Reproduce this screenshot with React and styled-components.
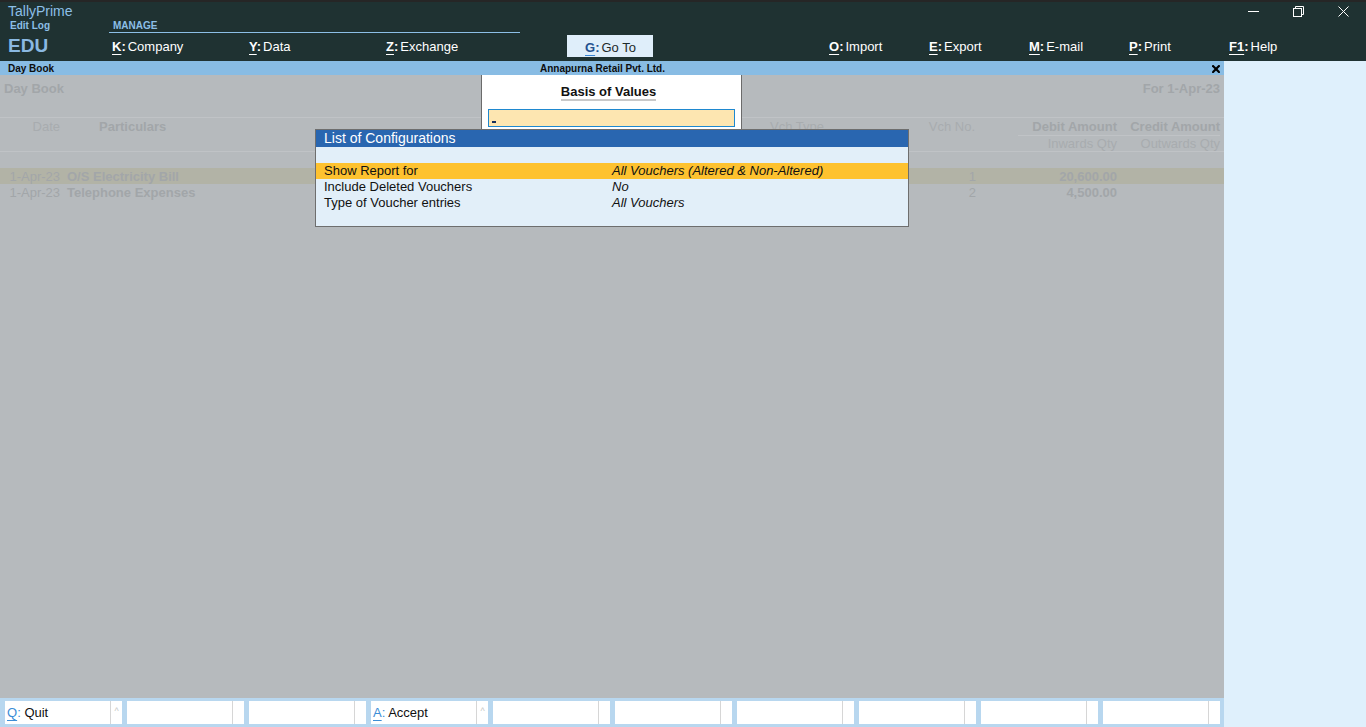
import React from 'react';
import styled, { createGlobalStyle } from 'styled-components';

const GlobalStyle = createGlobalStyle`
  html, body { margin: 0; padding: 0; }
  body { font-family: "Liberation Sans", Arial, sans-serif; overflow: hidden; background: #b6babd; }
  * { box-sizing: border-box; }
`;

const COLS = '60px 710px 130px 76px 42px 100px 102px';

const Screen = styled.div`
  width: 1366px;
  height: 727px;
  display: flex;
  flex-direction: column;
  overflow: hidden;
`;

/* ---------- top bar ---------- */
const TopBar = styled.header`
  height: 61px;
  flex-shrink: 0;
  background: #1f3232;
  border-top: 2px solid #262626;
  display: flex;
`;

const Brand = styled.div`
  width: 109px;
  display: flex;
  flex-direction: column;
  color: #8cbfe7;
`;

const ProductName = styled.div`
  font-size: 14px;
  line-height: 16px;
  padding: 1px 0 0 8px;
`;

const EditLog = styled.div`
  font-size: 10px;
  font-weight: bold;
  line-height: 12px;
  margin-top: 1px;
  padding-left: 10px;
`;

const EduMark = styled.div`
  font-size: 19px;
  font-weight: bold;
  line-height: 22px;
  margin-top: 3px;
  padding-left: 8px;
  color: #8ab9e2;
`;

const TopMain = styled.div`
  flex: 1;
  display: flex;
  flex-direction: column;
`;

const TopRow = styled.div`
  height: 31px;
  display: flex;
  align-items: flex-start;
`;

const ManageTab = styled.div`
  width: 411px;
  height: 31px;
  border-bottom: 1px solid #8cbfe7;
  display: flex;
  align-items: flex-end;
  padding: 0 0 0 4px;
  color: #8cbfe7;
  font-size: 10px;
  font-weight: bold;
  line-height: 12px;
`;

const WindowControls = styled.div`
  margin-left: auto;
  display: flex;
`;

const WinButton = styled.div`
  width: 45px;
  height: 18px;
  display: flex;
  align-items: center;
  justify-content: center;
`;

const MenuRow = styled.nav`
  height: 28px;
  padding: 0 0 2px 3px;
  display: flex;
  align-items: center;
`;

const MenuGroup = styled.div`
  display: flex;
  margin-left: ${p => p.$offset || 0}px;
`;

const MenuItem = styled.div`
  width: ${p => p.$w}px;
  font-size: 13px;
  line-height: 16px;
  padding-top: 2px;
  color: #ffffff;
  white-space: nowrap;
`;

const KeyChar = styled.span`
  font-weight: bold;
  color: ${p => (p.$dark ? '#24518f' : '#ffffff')};
  span {
    text-decoration: underline;
    text-underline-offset: 3px;
    text-decoration-color: ${p => (p.$dark ? '#3a86d4' : '#ffffff')};
  }
`;

const MenuLabel = styled.span`
  margin-left: 2px;
`;

const GoToBox = styled.div`
  margin-left: 44px;
  width: 86px;
  height: 22px;
  background: #dfeefa;
  display: flex;
  align-items: center;
  padding: 2px 0 0 18px;
  font-size: 13px;
  color: #1e2a2a;
`;

/* ---------- workspace ---------- */
const Workspace = styled.div`
  flex: 1;
  display: flex;
  min-height: 0;
`;

const MainPanel = styled.main`
  width: 1224px;
  display: flex;
  flex-direction: column;
`;

const SidePanel = styled.aside`
  flex: 1;
  background: #dff0fc;
`;

const TitleBar = styled.div`
  height: 14px;
  background: #88bce4;
  display: grid;
  grid-template-columns: 540px auto 1fr;
  align-items: center;
  font-size: 10px;
  font-weight: bold;
  line-height: 14px;
  padding-top: 1px;
  color: #0d0d0d;
`;

const TitleLeft = styled.div`
  padding-left: 8px;
`;

const TitleCenter = styled.div``;

const TitleRight = styled.div`
  display: flex;
  justify-content: flex-end;
  padding-right: 4px;
`;

const ReportBody = styled.section`
  flex: 1;
  background: #b6babd;
  position: relative;
  overflow: hidden;
  color: #a2a6a9;
  font-size: 13px;
`;

const ReportHeading = styled.div`
  height: 43px;
  border-bottom: 1px solid #c0c3c6;
  display: flex;
  justify-content: space-between;
  padding: 6px 4px 0 4px;
  font-weight: bold;
  line-height: 16px;
`;

const HeadRow = styled.div`
  display: grid;
  grid-template-columns: ${COLS};
  height: ${p => p.$h}px;
  border-bottom: ${p => (p.$rule ? '1px solid #c0c3c6' : 'none')};
`;

const HeadCell = styled.div`
  text-align: ${p => p.$align || 'left'};
  padding-left: ${p => p.$pl || 0}px;
  padding-right: ${p => p.$pr || 0}px;
  padding-top: 1px;
  font-weight: ${p => (p.$bold ? 'bold' : 'normal')};
  color: ${p => (p.$bold ? '#a2a6a9' : '#a8acaf')};
  line-height: 16px;
  white-space: nowrap;
  border-bottom: ${p => (p.$rule ? '1px solid #c0c3c6' : 'none')};
`;

const EntryList = styled.div`
  margin-top: 16px;
  display: flex;
  flex-direction: column;
`;

const EntryRow = styled.div`
  display: grid;
  grid-template-columns: ${COLS};
  height: 16px;
  line-height: 16px;
  padding-top: 1px;
  background: ${p => (p.$active ? '#b2b3a6' : 'transparent')};
`;

const Cell = styled.div`
  text-align: ${p => p.$align || 'left'};
  padding-left: ${p => p.$pl || 0}px;
  padding-right: ${p => p.$pr || 0}px;
  font-weight: ${p => (p.$bold ? 'bold' : 'normal')};
  white-space: nowrap;
`;

/* ---------- popups ---------- */
const BasisPopup = styled.div`
  position: absolute;
  left: 481px;
  top: 0;
  width: 261px;
  height: 60px;
  background: #ffffff;
  border-left: 1px solid #6b6b6b;
  border-right: 1px solid #6b6b6b;
  display: flex;
  flex-direction: column;
  align-items: center;
  padding-right: 6px;
`;

const BasisTitle = styled.div`
  margin-top: 9px;
  font-size: 13px;
  font-weight: bold;
  line-height: 15px;
  color: #111;
  border-bottom: 2px solid #c9c9c9;
`;

const BasisInput = styled.div`
  align-self: stretch;
  margin: 8px 0 0 6px;
  height: 18px;
  background: #fde6b1;
  border: 1px solid #1f88cf;
  position: relative;
`;

const Caret = styled.span`
  position: absolute;
  left: 3px;
  bottom: 3px;
  width: 4px;
  height: 2px;
  background: #16305c;
`;

const ConfigPopup = styled.div`
  position: absolute;
  left: 315px;
  top: 54px;
  width: 594px;
  height: 98px;
  background: #e2eff9;
  border: 1px solid #6e6e6e;
  display: flex;
  flex-direction: column;
`;

const ConfigHeader = styled.div`
  height: 17px;
  background: #2966b0;
  color: #ffffff;
  font-size: 14px;
  line-height: 17px;
  padding-left: 8px;
`;

const ConfigSpacer = styled.div`
  height: 16px;
`;

const ConfigRow = styled.div`
  display: grid;
  grid-template-columns: 288px 1fr;
  height: 16px;
  line-height: 16px;
  padding-left: 8px;
  font-size: 13px;
  color: #111;
  background: ${p => (p.$active ? '#fec22f' : 'transparent')};
`;

const ConfigLabel = styled.div``;

const ConfigValue = styled.div`
  font-style: italic;
`;

/* ---------- button bar ---------- */
const ButtonBar = styled.footer`
  height: 29px;
  background: #b8d7ef;
  display: flex;
  gap: 5px;
  padding: 3px 0 3px 5px;
`;

const FKey = styled.div`
  width: 117px;
  height: 23px;
  background: #ffffff;
  display: flex;
`;

const FKeyLabel = styled.div`
  flex: 1;
  padding: 1px 0 0 2px;
  font-size: 13px;
  line-height: 22px;
  color: #111;
  white-space: nowrap;
`;

const FKeyLetter = styled.span`
  color: #3c8dd6;
  span {
    text-decoration: underline;
    text-underline-offset: 3px;
  }
`;

const FKeyTail = styled.div`
  width: 12px;
  border-left: 1px solid #d6d6d6;
  color: #c4c4c4;
  font-size: 9px;
  line-height: 20px;
  text-align: center;
`;

/* ---------- icons ---------- */
const MinimizeIcon = () => (
  <svg width="11" height="11" viewBox="0 0 11 11">
    <line x1="0" y1="5.5" x2="11" y2="5.5" stroke="#fff" strokeWidth="1" />
  </svg>
);

const RestoreIcon = () => (
  <svg width="11" height="11" viewBox="0 0 11 11" fill="none" stroke="#fff" strokeWidth="1">
    <path d="M2.5 2.5 V0.5 H10.5 V8.5 H8.5" />
    <rect x="0.5" y="2.5" width="8" height="8" />
  </svg>
);

const CloseIcon = () => (
  <svg width="11" height="11" viewBox="0 0 11 11" stroke="#fff" strokeWidth="1">
    <line x1="0.5" y1="0.5" x2="10.5" y2="10.5" />
    <line x1="10.5" y1="0.5" x2="0.5" y2="10.5" />
  </svg>
);

const SmallClose = () => (
  <svg width="8" height="8" viewBox="0 0 8 8" stroke="#000" strokeWidth="2.2" strokeLinecap="square">
    <line x1="1" y1="1" x2="7" y2="7" />
    <line x1="7" y1="1" x2="1" y2="7" />
  </svg>
);

const Key = ({ k, dark }) => (
  <KeyChar $dark={dark}>
    <span>{k}</span>:
  </KeyChar>
);

const leftMenu = [
  ['K', 'Company'],
  ['Y', 'Data'],
  ['Z', 'Exchange'],
];
const rightMenu = [
  ['O', 'Import'],
  ['E', 'Export'],
  ['M', 'E-mail'],
  ['P', 'Print'],
  ['F1', 'Help'],
];

const entries = [
  { date: '1-Apr-23', part: 'O/S Electricity Bill', no: '1', debit: '20,600.00', active: true },
  { date: '1-Apr-23', part: 'Telephone Expenses', no: '2', debit: '4,500.00' },
];

const configs = [
  ['Show Report for', 'All Vouchers (Altered & Non-Altered)', true],
  ['Include Deleted Vouchers', 'No'],
  ['Type of Voucher entries', 'All Vouchers'],
];

const fkeys = [
  { k: 'Q', label: 'Quit', caret: true },
  {}, {},
  { k: 'A', label: 'Accept', caret: true },
  {}, {}, {}, {}, {}, {},
];

export default function App() {
  return (
    <>
      <GlobalStyle />
      <Screen>
        <TopBar>
          <Brand>
            <ProductName>TallyPrime</ProductName>
            <EditLog>Edit Log</EditLog>
            <EduMark>EDU</EduMark>
          </Brand>
          <TopMain>
            <TopRow>
              <ManageTab>MANAGE</ManageTab>
              <WindowControls>
                <WinButton><MinimizeIcon /></WinButton>
                <WinButton><RestoreIcon /></WinButton>
                <WinButton><CloseIcon /></WinButton>
              </WindowControls>
            </TopRow>
            <MenuRow>
              <MenuGroup>
                {leftMenu.map(([k, l]) => (
                  <MenuItem key={k} $w={137}>
                    <Key k={k} />
                    <MenuLabel>{l}</MenuLabel>
                  </MenuItem>
                ))}
              </MenuGroup>
              <GoToBox>
                <Key k="G" dark />
                <MenuLabel>Go To</MenuLabel>
              </GoToBox>
              <MenuGroup $offset={176}>
                {rightMenu.map(([k, l]) => (
                  <MenuItem key={k} $w={100}>
                    <Key k={k} />
                    <MenuLabel>{l}</MenuLabel>
                  </MenuItem>
                ))}
              </MenuGroup>
            </MenuRow>
          </TopMain>
        </TopBar>

        <Workspace>
          <MainPanel>
            <TitleBar>
              <TitleLeft>Day Book</TitleLeft>
              <TitleCenter>Annapurna Retail Pvt. Ltd.</TitleCenter>
              <TitleRight><SmallClose /></TitleRight>
            </TitleBar>

            <ReportBody>
              <ReportHeading>
                <span>Day Book</span>
                <span>For 1-Apr-23</span>
              </ReportHeading>
              <HeadRow $h={17}>
                <HeadCell $align="right">Date</HeadCell>
                <HeadCell $bold $pl={39}>Particulars</HeadCell>
                <HeadCell>Vch Type</HeadCell>
                <HeadCell $align="right" $pr={1}>Vch No.</HeadCell>
                <HeadCell />
                <HeadCell $bold $align="right" $pr={1} $rule>Debit Amount</HeadCell>
                <HeadCell $bold $align="right" $rule>Credit Amount</HeadCell>
              </HeadRow>
              <HeadRow $h={17} $rule>
                <HeadCell />
                <HeadCell />
                <HeadCell />
                <HeadCell />
                <HeadCell />
                <HeadCell $align="right" $pr={1}>Inwards Qty</HeadCell>
                <HeadCell $align="right">Outwards Qty</HeadCell>
              </HeadRow>
              <EntryList>
                {entries.map((e, i) => (
                  <EntryRow key={i} $active={e.active}>
                    <Cell $align="right">{e.date}</Cell>
                    <Cell $bold $pl={7}>{e.part}</Cell>
                    <Cell />
                    <Cell $align="right">{e.no}</Cell>
                    <Cell />
                    <Cell $bold $align="right" $pr={1}>{e.debit}</Cell>
                    <Cell />
                  </EntryRow>
                ))}
              </EntryList>

              <BasisPopup>
                <BasisTitle>Basis of Values</BasisTitle>
                <BasisInput><Caret /></BasisInput>
              </BasisPopup>

              <ConfigPopup>
                <ConfigHeader>List of Configurations</ConfigHeader>
                <ConfigSpacer />
                {configs.map(([l, v, a]) => (
                  <ConfigRow key={l} $active={a}>
                    <ConfigLabel>{l}</ConfigLabel>
                    <ConfigValue>{v}</ConfigValue>
                  </ConfigRow>
                ))}
              </ConfigPopup>
            </ReportBody>

            <ButtonBar>
              {fkeys.map((f, i) => (
                <FKey key={i}>
                  <FKeyLabel>
                    {f.k && (
                      <>
                        <FKeyLetter><span>{f.k}</span>:</FKeyLetter> {f.label}
                      </>
                    )}
                  </FKeyLabel>
                  <FKeyTail>{f.caret ? '^' : ''}</FKeyTail>
                </FKey>
              ))}
            </ButtonBar>
          </MainPanel>
          <SidePanel />
        </Workspace>
      </Screen>
    </>
  );
}
